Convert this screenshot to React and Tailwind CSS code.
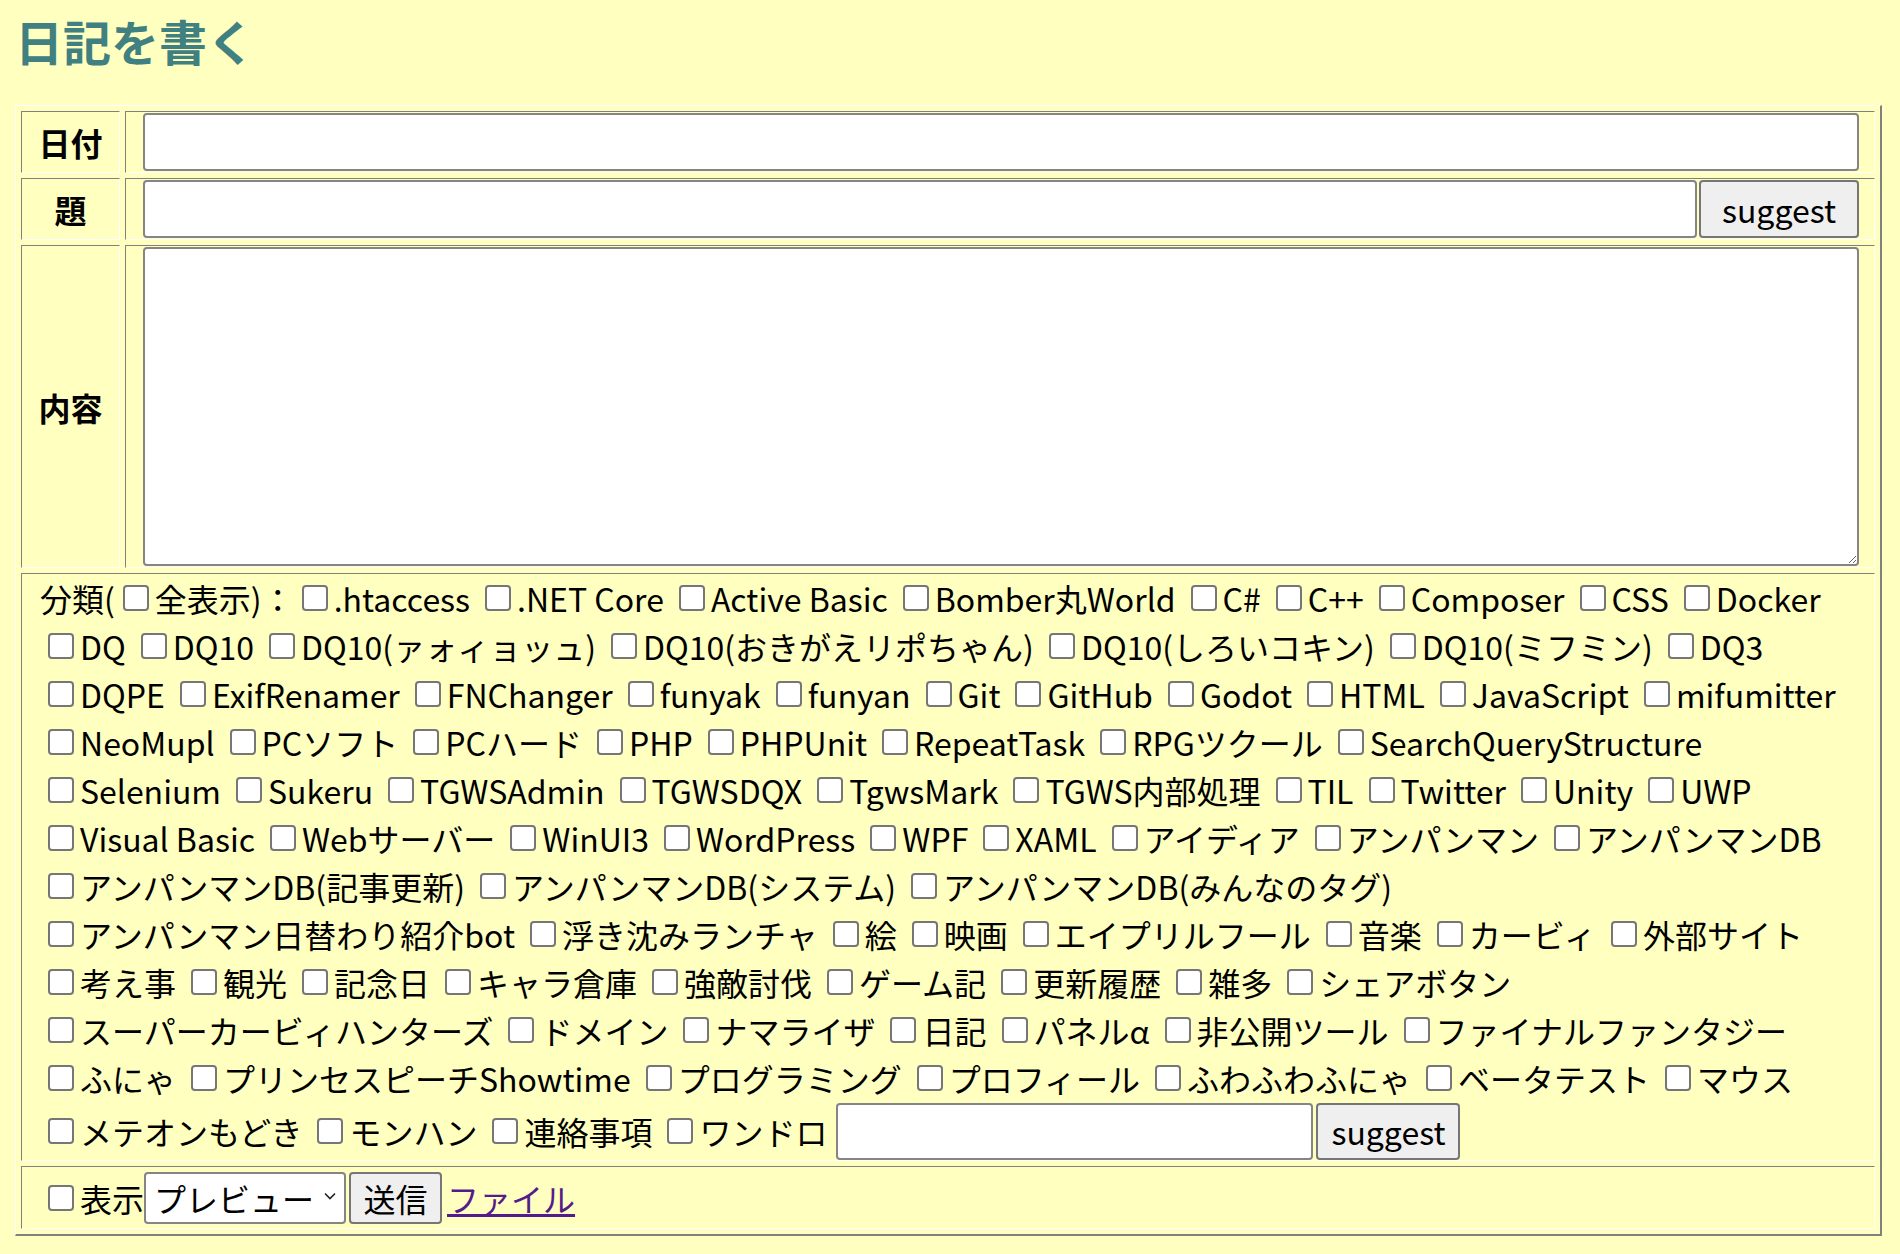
const lines = [
  ['DQ', 'DQ10', 'DQ10(ァォィョッュ)', 'DQ10(おきがえリポちゃん)', 'DQ10(しろいコキン)', 'DQ10(ミフミン)', 'DQ3'],
  ['DQPE', 'ExifRenamer', 'FNChanger', 'funyak', 'funyan', 'Git', 'GitHub', 'Godot', 'HTML', 'JavaScript', 'mifumitter'],
  ['NeoMupl', 'PCソフト', 'PCハード', 'PHP', 'PHPUnit', 'RepeatTask', 'RPGツクール', 'SearchQueryStructure'],
  ['Selenium', 'Sukeru', 'TGWSAdmin', 'TGWSDQX', 'TgwsMark', 'TGWS内部処理', 'TIL', 'Twitter', 'Unity', 'UWP'],
  ['Visual Basic', 'Webサーバー', 'WinUI3', 'WordPress', 'WPF', 'XAML', 'アイディア', 'アンパンマン', 'アンパンマンDB'],
  ['アンパンマンDB(記事更新)', 'アンパンマンDB(システム)', 'アンパンマンDB(みんなのタグ)'],
  ['アンパンマン日替わり紹介bot', '浮き沈みランチャ', '絵', '映画', 'エイプリルフール', '音楽', 'カービィ', '外部サイト'],
  ['考え事', '観光', '記念日', 'キャラ倉庫', '強敵討伐', 'ゲーム記', '更新履歴', '雑多', 'シェアボタン'],
  ['スーパーカービィハンターズ', 'ドメイン', 'ナマライザ', '日記', 'パネルα', '非公開ツール', 'ファイナルファンタジー'],
  ['ふにゃ', 'プリンセスピーチShowtime', 'プログラミング', 'プロフィール', 'ふわふわふにゃ', 'ベータテスト', 'マウス'],
];

const firstLine = ['.htaccess', '.NET Core', 'Active Basic', 'Bomber丸World', 'C#', 'C++', 'Composer', 'CSS', 'Docker'];
const lastLine = ['メテオンもどき', 'モンハン', '連絡事項', 'ワンドロ'];

function Box() {
  return (
    <input
      type="checkbox"
      className="appearance-none shrink-0 w-[26px] h-[26px] border-2 border-[#767676] rounded-[4px] bg-white ml-[8px] mr-[6px]"
    />
  );
}

function Item({ label }) {
  return (
    <label className="flex items-center mr-[7px]">
      <Box />
      <span>{label}</span>
    </label>
  );
}

const cell = 'border-t border-l border-t-[#808080] border-l-[#808080] border-r border-b border-r-white border-b-white';
const btn = 'bg-[#efefef] border-2 border-[#767676] rounded-[4px] text-black';
const field = 'bg-white border-2 border-[#858585] rounded-[4px]';

export default function App() {
  return (
    <div className="min-h-[1254px] bg-[#ffffc0] px-[15px] pt-[5px] text-[32px] text-black" style={{ fontFamily: '"Noto Sans CJK JP", "Noto Sans", sans-serif' }}>
      <h1 className="text-[48px] font-bold text-[#408080] leading-[70px] mb-[30px]">日記を書く</h1>

      <div className="w-[1867px] border-t border-l border-t-white border-l-white border-r-2 border-b-2 border-r-[#808080] border-b-[#808080] p-[5px] grid grid-cols-[99px_1fr] gap-[5px]">
        {/* 日付 */}
        <div className={`${cell} flex items-center justify-center font-bold`}>日付</div>
        <div className={`${cell} pl-[17px] pr-[15px] py-px`}>
          <input type="text" className={`${field} w-full h-[58px] block`} />
        </div>

        {/* 題 */}
        <div className={`${cell} flex items-center justify-center font-bold`}>題</div>
        <div className={`${cell} pl-[17px] pr-[15px] py-px flex gap-[2px]`}>
          <input type="text" className={`${field} flex-1 h-[58px] block`} />
          <button className={`${btn} w-[160px] h-[58px] leading-none`}>suggest</button>
        </div>

        {/* 内容 */}
        <div className={`${cell} flex items-center justify-center font-bold`}>内容</div>
        <div className={`${cell} pl-[17px] pr-[15px] py-px`}>
          <textarea className={`${field} w-full h-[319px] block`} />
        </div>

        {/* 分類 */}
        <div className={`${cell} col-span-2 pl-[18px]`}>
          <div className="flex items-center h-[48px] whitespace-nowrap">
            <span>分類(</span>
            <Box />
            <span>全表示)：</span>
            {firstLine.map(l => <Item key={l} label={l} />)}
          </div>
          {lines.map((row, i) => (
            <div key={i} className="flex items-center h-[48px] whitespace-nowrap">
              {row.map(l => <Item key={l} label={l} />)}
            </div>
          ))}
          <div className="flex items-center h-[58px] whitespace-nowrap">
            {lastLine.map(l => <Item key={l} label={l} />)}
            <input type="text" className={`${field} ml-[2px] w-[477px] h-[57px]`} />
            <button className={`${btn} ml-[3px] w-[144px] h-[57px] leading-none`}>suggest</button>
          </div>
        </div>

        {/* 送信 */}
        <div className={`${cell} col-span-2 pl-[18px] h-[63px] flex items-center`}>
          <Box />
          <span>表示</span>
          <div className="relative">
            <select className={`${field} appearance-none w-[202px] h-[52px] pl-[8px] text-[32px] leading-none`}>
              <option>プレビュー</option>
            </select>
            <svg className="absolute right-[10px] top-[20px] pointer-events-none" width="12" height="8" viewBox="0 0 12 8">
              <path d="M1 1.5 L6 6.5 L11 1.5" fill="none" stroke="#222" strokeWidth="1.6" />
            </svg>
          </div>
          <button className={`${btn} ml-[3px] w-[93px] h-[52px] leading-none`}>送信</button>
          <a href="#" className="ml-[5px] text-[#551a8b] underline">ファイル</a>
        </div>
      </div>
    </div>
  );
}
